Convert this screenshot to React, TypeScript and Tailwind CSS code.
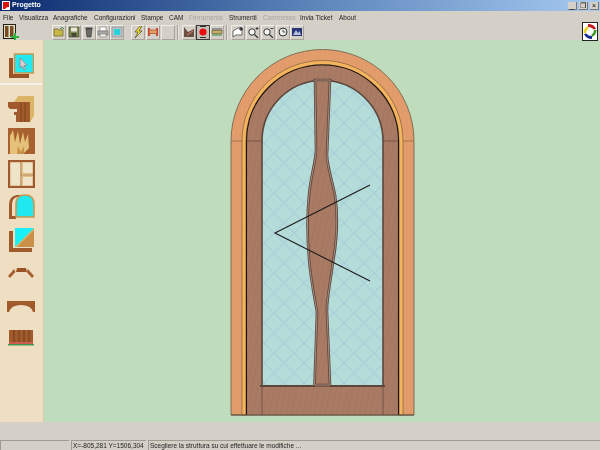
import React from "react";

const font = { fontFamily: '"Liberation Sans", Arial, sans-serif' };

const menus: [string, number, boolean?][] = [
  ["File", 16], ["Visualizza", 34], ["Anagrafiche", 41], ["Configurazioni", 47], ["Stampe", 28],
  ["CAM", 20], ["Ferramenta", 40, true], ["Strumenti", 34], ["Commesse", 37, true], ["Invia Ticket", 39], ["About", 30],
];

function Btn({ children, active }: { children?: React.ReactNode; active?: boolean }) {
  return (
    <div className={active
      ? "w-[14px] h-[15px] bg-[#c4bfb8] border border-[#3c3a38] flex items-center justify-center"
      : "w-[14px] h-[15px] bg-[#d4d0c8] border-r border-b border-[#a8a49c] border-t-[#efedE8] border-l-[#efede8] border-t border-l flex items-center justify-center"}>
      <svg width="12" height="12" viewBox="0 0 12 12">{children}</svg>
    </div>
  );
}

function Sep() {
  return <div className="w-[2px] h-[15px] mx-[2px] border-l border-[#a8a49c] bg-[#e4e2dc]" />;
}

function Door() {
  const mullion = "M315 80 L316 150 C316 160 310 180 309 195 C307 215 307 235 309 258 C310 275 314 295 317 312 L314.5 385 L330 385 L327 312 C326.5 300 330 285 333 262 C337 240 338 215 335 195 C332 180 327 165 327 155 L330 80 Z";
  return (
    <svg className="w-full h-full" viewBox="44 40 556 382">
      <defs>
        <pattern id="glass" width="20" height="20" patternUnits="userSpaceOnUse" x="4" y="3">
          <rect width="20" height="20" fill="#b4dcd9" />
          <path d="M0 0 L20 20 M20 0 L0 20" stroke="#a9cfdb" strokeWidth="1.1" fill="none" />
        </pattern>
        <pattern id="woodO" width="9" height="40" patternUnits="userSpaceOnUse">
          <rect width="9" height="40" fill="#e39d6b" />
          <path d="M2 0 V40 M6 0 V40" stroke="#e0986a" strokeWidth="1" />
        </pattern>
        <pattern id="woodB" width="11" height="17" patternUnits="userSpaceOnUse" patternTransform="rotate(12)">
          <rect width="11" height="17" fill="#a97a64" />
          <path d="M3 0 V17 M8 0 V17" stroke="#a4745e" strokeWidth="1" />
        </pattern>
      </defs>
      <path d="M231 415 V141 A91.5 91.5 0 0 1 414 141 V415 Z" fill="url(#woodO)" stroke="#6a5a48" strokeWidth="0.8" />
      <path d="M231 141 H242 M403 141 H414" stroke="#9a6a48" strokeWidth="0.8" />
      <path d="M242 415 V141 A80.5 80.5 0 0 1 403 141 V415 H399 V141 A76.5 76.5 0 0 0 246 141 V415 Z" fill="#f4b45e" stroke="#6a5030" strokeWidth="0.6" />
      <path d="M247 415 V141 A75.5 75.5 0 0 1 398 141 V415 Z" fill="url(#woodB)" />
      <path d="M246.5 415 V141 A76 76 0 0 1 398.5 141 V415" fill="none" stroke="#1c1410" strokeWidth="1.1" />
      <path d="M247 141 H262 M383 141 H398" stroke="#6a4c3e" strokeWidth="0.8" />
      <path d="M262 386 V141 A60.5 60.5 0 0 1 383 141 V386 Z" fill="url(#glass)" stroke="#5c463c" strokeWidth="1.6" />
      <path d="M262 386 V415 M383 386 V415" stroke="#6a4c3e" strokeWidth="0.8" />
      <path d="M260 386 H315 M330 386 H385" stroke="#5c463c" strokeWidth="1.8" />
      <path d="M231 415 H414" stroke="#5a4a3c" strokeWidth="1" />
      <path d={mullion} fill="url(#woodB)" stroke="#5c463c" strokeWidth="2.6" />
      <path d={mullion} fill="none" stroke="#b09484" strokeWidth="0.9" />
      <path d="M315 386 H330" stroke="#8a6452" strokeWidth="1" />
      <path d="M370 185 L275 233 L370 281" fill="none" stroke="#1c1a1a" strokeWidth="1.1" />
    </svg>
  );
}

export default function App() {
  return (
    <div className="w-[600px] h-[450px] flex flex-col overflow-hidden bg-[#d4d0c8] text-[7px] text-[#222] blur-[0.35px]" style={font}>
      {/* title bar */}
      <div className="h-[11px] flex items-center bg-gradient-to-r from-[#0c2a6e] via-[#5a82b8] to-[#a6caf0] pl-[2px] pr-[1px]">
        <svg width="8" height="9" viewBox="0 0 8 9" className="mr-[2px]">
          <rect width="8" height="9" fill="#fff" />
          <path d="M1 1 H7 V6 Q4 6 3 8 H1 Z" fill="#e01010" />
        </svg>
        <span className="text-white font-bold text-[7px]">Progetto</span>
        <div className="ml-auto flex gap-[2px]">
          {["_", "❐", "×"].map((c, i) => (
            <div key={i} className="w-[9px] h-[8px] bg-[#d4d0c8] border-r border-b border-[#777] text-[7px] leading-[8px] text-center text-black">{c}</div>
          ))}
        </div>
      </div>
      {/* menu */}
      <div className="h-[13px] flex items-center pl-[3px] text-[6.5px] whitespace-nowrap">
        {menus.map(([m, w, dim]) => (
          <div key={m} style={{ width: w }} className={dim ? "shrink-0 text-[#a8a49c]" : "shrink-0 text-[#222]"}>{m}</div>
        ))}
      </div>
      {/* toolbar */}
      <div className="h-[16px] flex items-center relative">
        <svg width="16" height="16" viewBox="0 0 16 16" className="ml-[3px] mr-[33px]">
          <rect x="0.5" y="0.5" width="12" height="14" fill="#d8e8d0" stroke="#2a1a10" />
          <rect x="2" y="2" width="3.5" height="11" fill="#7a4a20" />
          <rect x="7" y="2" width="3.5" height="11" fill="#7a4a20" />
          <path d="M8 12 H11 V9 H13 V12 H16 V14 H13 V16 H11 V14 H8 Z" fill="#2fb43c" />
        </svg>
        <Btn><path d="M1 3 H5 L6 4 H10 V10 H1 Z" fill="#c8b848" stroke="#6a6020" strokeWidth="0.7" /><path d="M7 3 Q9 0 11 3" stroke="#3a7a3a" fill="none" /></Btn>
        <div className="w-[1px]" />
        <Btn><rect x="1" y="1" width="10" height="10" fill="#7c8a50" stroke="#44482c" strokeWidth="0.7" /><rect x="3" y="1.5" width="6" height="4" fill="#e8e8d8" /><rect x="3.5" y="7" width="5" height="4" fill="#484838" /></Btn>
        <div className="w-[1px]" />
        <Btn><path d="M3 3 H9 L8 11 H4 Z" fill="#6a6a68" stroke="#333" strokeWidth="0.6" /><rect x="2.5" y="1.5" width="7" height="1.5" fill="#444" /></Btn>
        <Btn><rect x="3" y="1" width="6" height="4" fill="#fff" stroke="#777" strokeWidth="0.6" /><rect x="1" y="5" width="10" height="4" fill="#a8a8a4" stroke="#666" strokeWidth="0.6" /><rect x="3" y="8" width="6" height="3" fill="#eee" stroke="#777" strokeWidth="0.6" /></Btn>
        <Btn><rect x="1" y="1" width="10" height="10" fill="#b8c0c8" stroke="#888" strokeWidth="0.6" /><rect x="3" y="3" width="6" height="6" fill="#28d4d8" /></Btn>
        <div className="w-[7px]" />
        <Btn><path d="M8 0 L3 6 H6 L3 12 L10 5 H7 L10 0 Z" fill="#f4e020" stroke="#333" strokeWidth="0.6" /></Btn>
        <div className="w-[1px]" />
        <Btn><path d="M2 2 V10 M10 2 V10" stroke="#d02818" strokeWidth="1.6" /><rect x="2" y="4" width="8" height="3.5" fill="#e0a060" stroke="#b03018" strokeWidth="0.6" /></Btn>
        <div className="w-[1px]" />
        <Btn />
        <Sep />
        <div className="w-[1px]" />
        <Btn><path d="M1 1 V11 H11 V3 L5 6 Z" fill="#6a5040" /><path d="M4 9 L10 5" stroke="#e08070" /></Btn>
        <Btn active><circle cx="6" cy="6" r="3.6" fill="#e80c10" /><path d="M3 0.5 H9 M3 11.5 H9" stroke="#333" /></Btn>
        <Btn><rect x="1" y="4.5" width="10" height="3" fill="#c8b060" stroke="#5a5030" strokeWidth="0.6" /><path d="M1 3 H11" stroke="#555" /><path d="M1 9 H11" stroke="#2a8a3a" /></Btn>
        <Sep />
        <div className="w-[1px]" />
        <Btn><path d="M1 5 L6 2 H10 V9 H4 L1 11 Z" fill="#fff" stroke="#333" strokeWidth="0.7" /><path d="M9 1 V5 M7 3 H11" stroke="#111" /></Btn>
        <div className="w-[1px]" />
        <Btn><circle cx="5" cy="6" r="3.2" fill="#f4f4f0" stroke="#333" /><path d="M7.5 8.5 L11 12" stroke="#333" strokeWidth="1.2" /><path d="M10 1 V4 M8.5 2.5 H11.5" stroke="#222" strokeWidth="0.8" /></Btn>
        <div className="w-[1px]" />
        <Btn><circle cx="5" cy="6" r="3.2" fill="#f4f4f0" stroke="#333" /><path d="M7.5 8.5 L11 12" stroke="#333" strokeWidth="1.2" /><path d="M8.5 2.5 H11.5" stroke="#222" strokeWidth="0.8" /></Btn>
        <div className="w-[1px]" />
        <Btn><circle cx="6" cy="6" r="4" fill="#f0f0ec" stroke="#333" /><path d="M6 3.5 V6 H8.5" stroke="#555" fill="none" /></Btn>
        <Btn><rect x="1" y="2" width="10" height="8" fill="#2a3478" /><path d="M2 9 L5 4 L7 7 L8.5 5 L10 9 Z" fill="#b8c0e0" /></Btn>
        <svg width="16" height="19" viewBox="0 0 16 19" className="absolute right-[2px] top-[-2px]">
          <rect x="0.5" y="0.5" width="15" height="18" fill="#fff" stroke="#222" />
          <path d="M6 2 Q12 2 14 7 L11.5 7.5 Q10 5 6 5 Z" fill="#c81820" />
          <path d="M14.5 8 Q14.5 13 10 15 L9.5 12.5 Q12 11 12 8 Z" fill="#3a9a28" />
          <path d="M10 17 Q4 17 2 12 L4.5 11.5 Q6 14 10 14 Z" fill="#1a2a90" />
          <path d="M1.5 11 Q1.5 6 6 4 L6.5 6.5 Q4 8 4 11 Z" fill="#e8d020" />
        </svg>
      </div>
      {/* main */}
      <div className="flex-1 flex min-h-0">
        <div className="w-[44px] bg-[#eedfc3] border-r border-[#d8ccb0] flex flex-col items-center pr-[1px]">
          <svg width="26" height="26" viewBox="0 0 26 26" className="mt-[13px] mr-[1px]">
            <path d="M1 5 H5 V21 H21 V25 H1 Z" fill="#9a5428" />
            <rect x="6.5" y="1" width="19" height="19" fill="#22e8f0" stroke="#c89850" strokeWidth="1.5" />
            <path d="M12 5 L12 15 L14.5 13 L16 17 L17.5 16 L16 12.5 L19 12 Z" fill="#d8d0d0" stroke="#8a6a6a" strokeWidth="0.6" />
          </svg>
          <div className="w-full h-[2px] bg-[#f4f2e8] mt-[4px]" />
          <svg width="26" height="26" viewBox="0 0 26 26" className="mt-[11px]">
            <path d="M6 6 L10 0 H26 V20 L22 26 Z" fill="#dcb468" />
            <path d="M0 6 H22 V26 H8 V19 H6 V16 H9 V13 H2 L0 11 Z" fill="#a05a2c" />
            <path d="M13 7 V26 M17 7 V26" stroke="#7a3c18" strokeWidth="0.8" />
          </svg>
          <svg width="27" height="26" viewBox="0 0 27 26" className="mt-[6px]">
            <rect width="27" height="26" fill="#a86030" />
            <path d="M2 26 L2 8 L5 2 L7 14 L10 3 L12 16 L15 4 L17 14 L20 6 L21 20 L15 26 Z" fill="#e4c078" />
            <path d="M9 26 L10 18 L13 24 L16 18 V26 Z" fill="#c89048" />
          </svg>
          <svg width="27" height="28" viewBox="0 0 27 28" className="mt-[6px]">
            <rect x="1" y="1" width="25" height="26" fill="#efe3c9" stroke="#a05a2c" strokeWidth="2.4" />
            <path d="M13 2 V26 M13 15 H25" stroke="#a86830" strokeWidth="1" />
            <path d="M14.5 2 V26 M14.5 16.5 H25 M14.5 13.5 H25" stroke="#e2c080" strokeWidth="1" />
          </svg>
          <svg width="27" height="25" viewBox="0 0 27 25" className="mt-[6px]">
            <path d="M1 25 V11 Q1 2 9 1 H14 V3 H9 Q4 4 4 11 V22 H8 V25 Z" fill="#a05a2c" />
            <path d="M8 23 V10 Q8 1 17 1 Q26 1 26 10 V23 Z" fill="#20e8f0" stroke="#c89850" strokeWidth="1.6" />
          </svg>
          <svg width="26" height="24" viewBox="0 0 26 24" className="mt-[9px]">
            <path d="M1 3 H5 V20 H24 V24 H1 Z" fill="#a05a2c" />
            <rect x="7" y="0" width="19" height="19" fill="#dcb468" />
            <path d="M7 0 H26 L7 19 Z" fill="#18f0f8" />
            <path d="M26 2 V19 H9 Z" fill="#c89048" />
          </svg>
          <svg width="26" height="11" viewBox="0 0 26 11" className="mt-[16px]">
            <path d="M9 0 H18 L19 4 H8 Z" fill="#9a5428" />
            <path d="M6 1 L7.5 4 L2 10 L0 8 Z" fill="#a86030" />
            <path d="M20 1 L18.5 4 L24 10 L26 8 Z" fill="#a86030" />
          </svg>
          <svg width="28" height="11" viewBox="0 0 28 11" className="mt-[22px]">
            <path d="M0 11 V0 H28 V11 H26 Q24 4 14 4 Q4 4 2 11 Z" fill="#a05a2c" />
          </svg>
          <svg width="26" height="16" viewBox="0 0 26 16" className="mt-[18px]">
            <rect x="1" y="0" width="24" height="12" fill="#a05a2c" />
            <path d="M6 0 V12 M11 0 V12 M16 0 V12 M21 0 V12" stroke="#6e3a18" strokeWidth="1" />
            <rect x="1" y="12" width="24" height="2" fill="#cf5a50" />
            <rect x="0" y="14" width="26" height="1.5" fill="#3f9a50" />
          </svg>
        </div>
        <div className="flex-1 bg-[#bfdcbd] min-w-0">
          <Door />
        </div>
      </div>
      {/* gray strip */}
      <div className="h-[18px] bg-[#d4d0c8]" />
      {/* status */}
      <div className="h-[10px] flex text-[6.5px] leading-[9px] text-[#222]">
        <div className="w-[69px] border-t border-l border-[#a09c94] mr-[2px]" />
        <div className="w-[75px] border-t border-l border-[#a09c94] pl-[1px] mr-[2px] whitespace-nowrap overflow-hidden">X=-805,281 Y=1506,304</div>
        <div className="flex-1 border-t border-l border-[#a09c94] pl-[1px] whitespace-nowrap">Scegliere la struttura su cui effettuare le modifiche ...</div>
      </div>
    </div>
  );
}
